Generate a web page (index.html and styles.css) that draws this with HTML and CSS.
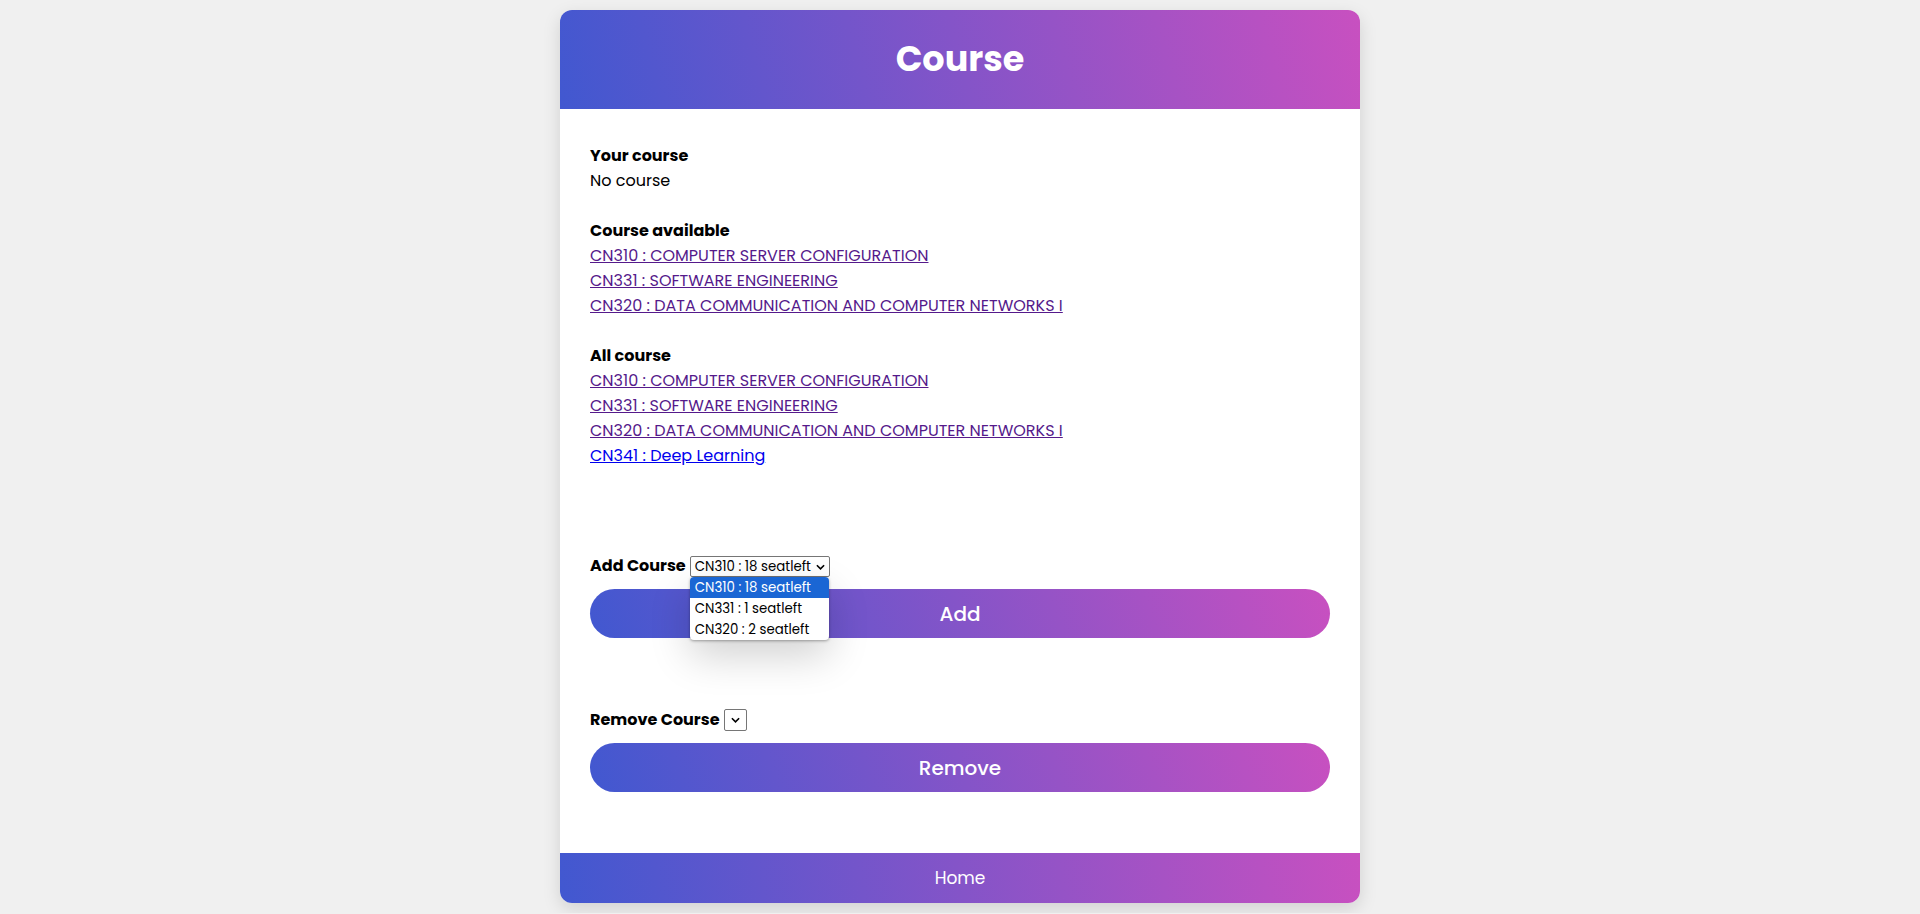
FILE: index.html
```html
<!DOCTYPE html>
<html lang="en">
<head>
<meta charset="utf-8">
<title>Course</title>
<link rel="stylesheet" href="styles.css">
</head>
<body>
<div class="card">
  <header class="card-head">
    <h1 class="title">Course</h1>
  </header>
  <main class="card-body">
    <section class="block">
      <div class="label">Your course</div>
      <div class="line">No course</div>
    </section>
    <section class="block">
      <div class="label">Course available</div>
      <a class="line link visited" href="#">CN310 : COMPUTER SERVER CONFIGURATION</a>
      <a class="line link visited" href="#">CN331 : SOFTWARE ENGINEERING</a>
      <a class="line link visited" href="#">CN320 : DATA COMMUNICATION AND COMPUTER NETWORKS I</a>
    </section>
    <section class="block">
      <div class="label">All course</div>
      <a class="line link visited" href="#">CN310 : COMPUTER SERVER CONFIGURATION</a>
      <a class="line link visited" href="#">CN331 : SOFTWARE ENGINEERING</a>
      <a class="line link visited" href="#">CN320 : DATA COMMUNICATION AND COMPUTER NETWORKS I</a>
      <a class="line link" href="#">CN341 : Deep Learning</a>
    </section>

    <form class="action action-add">
      <div class="field">
        <span class="label">Add Course</span>
        <span class="select-wrap">
          <span class="select">CN310 : 18 seatleft<svg class="chev" viewBox="0 0 10 6" width="9" height="6"><path d="M1 1 L5 5 L9 1" fill="none" stroke="#000" stroke-width="1.8"/></svg></span>
          <ul class="dropdown">
            <li class="opt active">CN310 : 18 seatleft</li>
            <li class="opt">CN331 : 1 seatleft</li>
            <li class="opt">CN320 : 2 seatleft</li>
          </ul>
        </span>
      </div>
      <button type="button" class="btn">Add</button>
    </form>

    <form class="action action-remove">
      <div class="field">
        <span class="label">Remove Course</span>
        <span class="select select-empty"><svg class="chev" viewBox="0 0 10 6" width="9" height="6"><path d="M1 1 L5 5 L9 1" fill="none" stroke="#000" stroke-width="1.8"/></svg></span>
      </div>
      <button type="button" class="btn">Remove</button>
    </form>
  </main>
  <footer class="card-foot">
    <a class="home" href="#">Home</a>
  </footer>
</div>
</body>
</html>
```

FILE: styles.css
```css
html, body {
  margin: 0;
  padding: 0;
}
body {
  background: #f0f0f0;
  font-family: Poppins, "Open Sans", "DejaVu Sans", sans-serif;
  font-size: 16px;
  color: #000;
}
.card {
  width: 800px;
  margin: 10px auto 10px;
  background: #fff;
  border-radius: 12px;
  box-shadow: 0 6px 18px rgba(0, 0, 0, 0.13);
}
.card-head {
  height: 99px;
  border-radius: 12px 12px 0 0;
  background: linear-gradient(75deg, #4158d0 0%, #c850c0 100%);
  display: flex;
  align-items: center;
  justify-content: center;
}
.title {
  margin: 0 0 2px;
  color: #fff;
  font-size: 35px;
  font-weight: 700;
  line-height: 1;
}
.card-body {
  padding: 34px 30px 61px;
}
.block {
  display: flex;
  flex-direction: column;
  align-items: flex-start;
  margin-bottom: 25px;
  line-height: 25px;
  font-size: 16px;
}
.label {
  font-weight: 700;
  font-size: 16px;
}
.line {
  display: block;
}
.link {
  color: #0000ee;
  text-decoration: underline;
}
.link.visited {
  color: #551a8b;
}
.action-add {
  margin-top: 85px;
}
.action-remove {
  margin-top: 69px;
}
.field {
  display: flex;
  align-items: center;
  gap: 4px;
  height: 25px;
  line-height: 25px;
}
.select-wrap {
  position: relative;
  display: inline-block;
}
.select {
  box-sizing: border-box;
  display: inline-flex;
  align-items: center;
  justify-content: space-between;
  height: 21px;
  padding: 0 4px 0 4px;
  width: 140px;
  border: 1px solid #767676;
  border-radius: 2px;
  background: #fff;
  font-size: 13.33px;
  line-height: 19px;
  color: #000;
}
.select-empty {
  width: 23px;
  height: 22px;
  justify-content: center;
  padding: 0;
}
.chev {
  display: block;
}
.dropdown {
  position: absolute;
  left: 0;
  top: 24px;
  width: 139px;
  margin: 0;
  padding: 0;
  list-style: none;
  background: #fff;
  border-radius: 4px;
  overflow: hidden;
  box-shadow: 0 1px 3px rgba(0, 0, 0, 0.35), 0 16px 40px rgba(0, 0, 0, 0.18);
  z-index: 5;
}
.opt {
  height: 21px;
  line-height: 21px;
  padding: 0 5px;
  font-size: 13.33px;
  color: #000;
}
.opt.active {
  background: #1a66d4;
  color: #fff;
}
.btn {
  display: block;
  width: 100%;
  height: 49px;
  margin-top: 11px;
  border: none;
  border-radius: 25px;
  background: linear-gradient(70deg, #4158d0 0%, #c850c0 100%);
  color: #fff;
  font-family: inherit;
  font-size: 20px;
  font-weight: 500;
  cursor: pointer;
}
.card-foot {
  height: 50px;
  border-radius: 0 0 12px 12px;
  background: linear-gradient(80deg, #4158d0 0%, #c850c0 100%);
  display: flex;
  align-items: center;
  justify-content: center;
}
.home {
  color: #fff;
  text-decoration: none;
  font-size: 17px;
}
```
